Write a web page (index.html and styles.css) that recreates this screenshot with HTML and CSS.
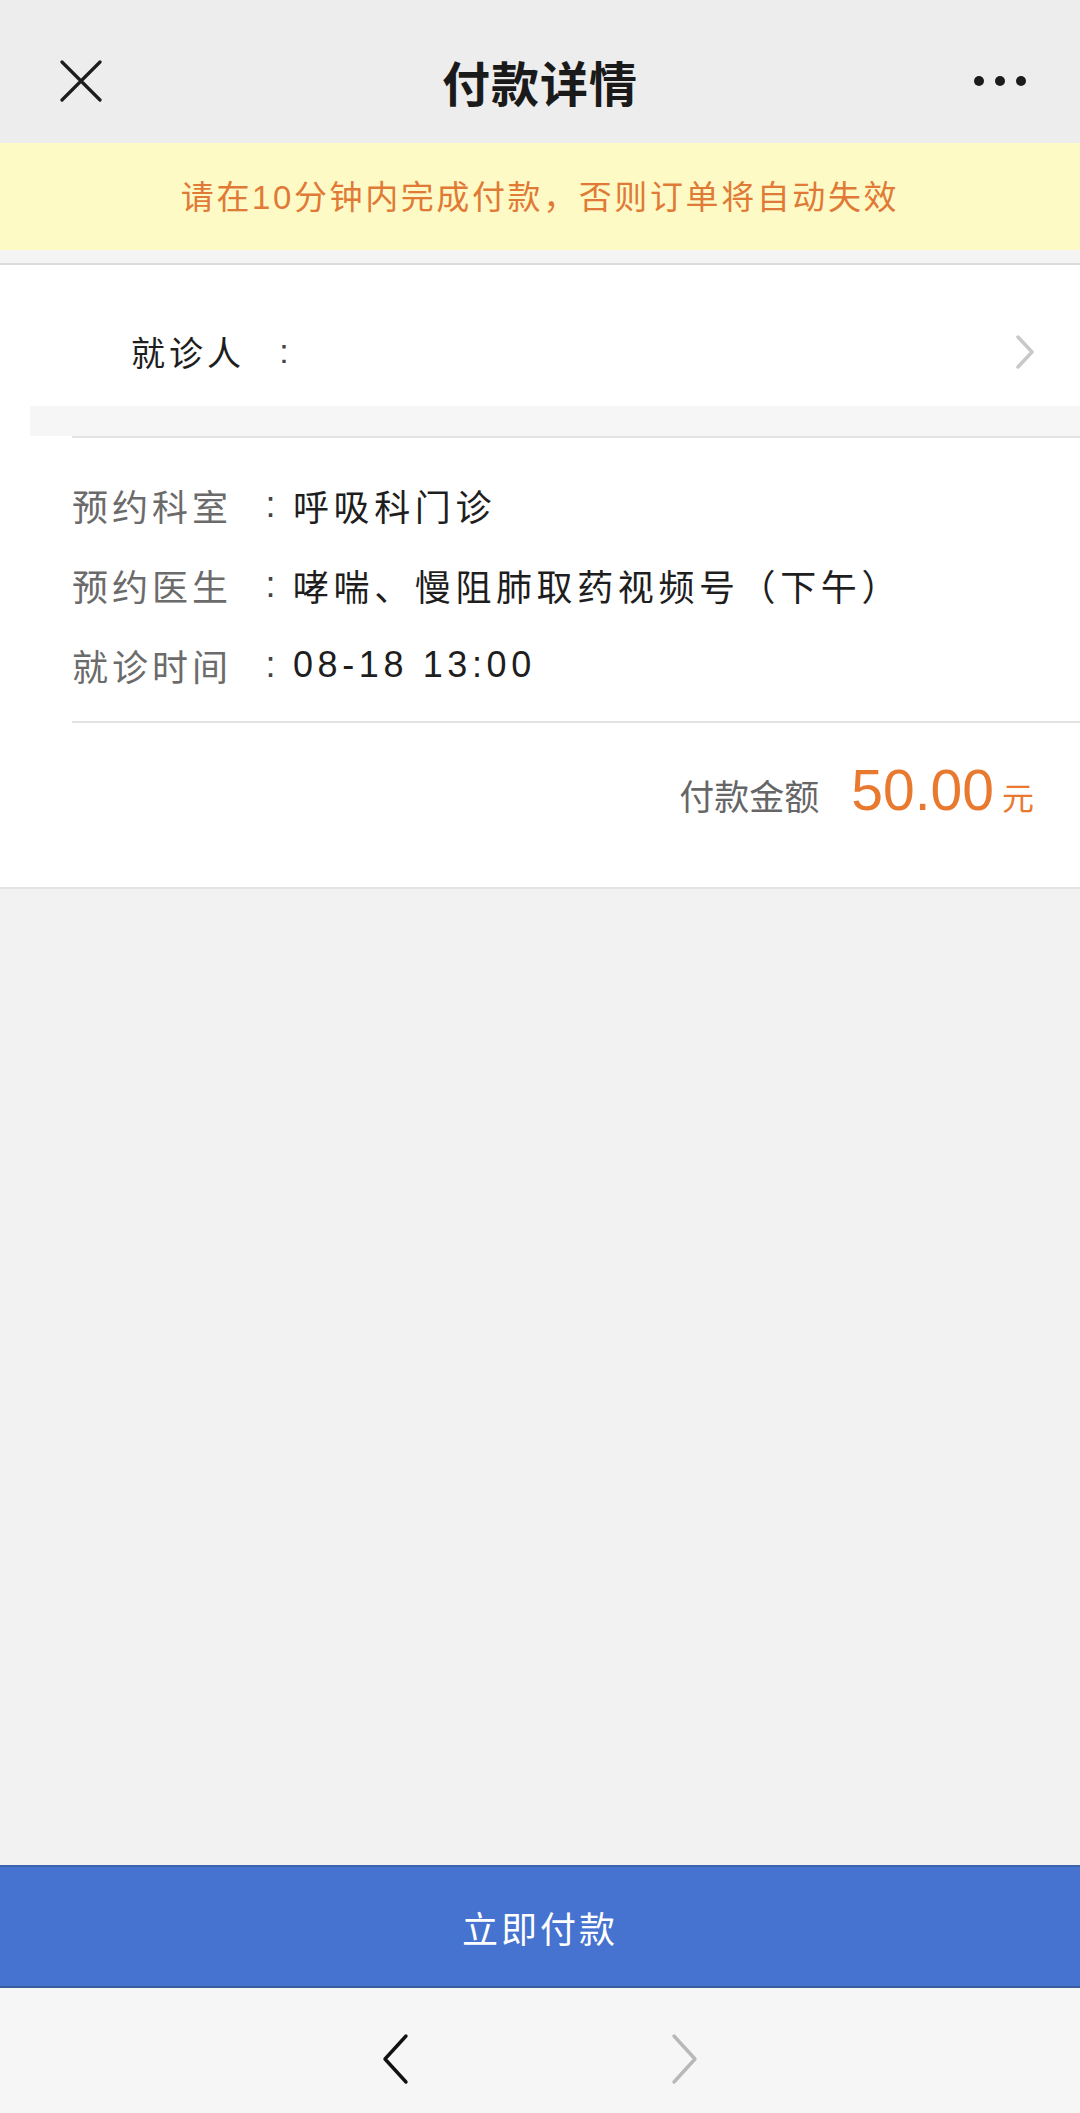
FILE: index.html
```html
<!DOCTYPE html>
<html lang="zh-CN">
<head>
<meta charset="utf-8">
<title>付款详情</title>
<link rel="stylesheet" href="styles.css">
</head>
<body>
<div class="page">
  <header class="nav">
    <svg class="nav-close" width="42" height="42" viewBox="0 0 42 42"><path d="M2 2 L40 40 M40 2 L2 40" stroke="#1c1c1c" stroke-width="3.2" fill="none" stroke-linecap="round"/></svg>
    <h1 class="nav-title">付款详情</h1>
    <div class="nav-more"><span></span><span></span><span></span></div>
  </header>
  <div class="notice">请在10分钟内完成付款，否则订单将自动失效</div>
  <div class="gap"></div>
  <section class="card">
    <div class="patient">
      <span class="patient-label">就诊人</span><span class="colon">:</span>
      <svg class="chev" width="22" height="34" viewBox="0 0 22 34"><path d="M4 2 L18 17 L4 32" stroke="#c8c8c8" stroke-width="3.5" fill="none" stroke-linecap="round" stroke-linejoin="round"/></svg>
    </div>
    <div class="strip"></div>
    <div class="details">
      <div class="row"><span class="label">预约科室</span><span class="colon">:</span><span class="value">呼吸科门诊</span></div>
      <div class="row"><span class="label">预约医生</span><span class="colon">:</span><span class="value">哮喘、慢阻肺取药视频号（下午）</span></div>
      <div class="row"><span class="label">就诊时间</span><span class="colon">:</span><span class="value">08-18 13:00</span></div>
    </div>
    <div class="amount">
      <span class="amount-label">付款金额</span>
      <span class="amount-num">50.00</span>
      <span class="amount-unit">元</span>
    </div>
  </section>
  <div class="spacer"></div>
  <button class="pay">立即付款</button>
  <footer class="toolbar">
    <svg width="32" height="52" viewBox="0 0 32 52"><path d="M27 3 L6 26 L27 49" stroke="#111" stroke-width="3.4" fill="none" stroke-linecap="round" stroke-linejoin="round"/></svg>
    <svg width="32" height="52" viewBox="0 0 32 52"><path d="M5 3 L26 26 L5 49" stroke="#b8b8b8" stroke-width="3.4" fill="none" stroke-linecap="round" stroke-linejoin="round"/></svg>
  </footer>
</div>
</body>
</html>
```

FILE: styles.css
```css
* { box-sizing: border-box; margin: 0; padding: 0; }
html, body { width: 1080px; height: 2113px; }
body {
  background: #f2f2f2;
  font-family: "Liberation Sans", "Noto Sans CJK SC", sans-serif;
  color: #222;
}
.page { display: flex; flex-direction: column; height: 2113px; }

.nav {
  height: 143px;
  background: #ededed;
  display: flex;
  align-items: center;
  justify-content: space-between;
  padding: 18px 54px 0 60px;
  position: relative;
}
.nav-title {
  position: absolute;
  left: 0; right: 0;
  text-align: center;
  font-size: 48px;
  font-weight: 700;
  color: #1a1a1a;
  letter-spacing: 1px;
  pointer-events: none;
}
.nav-more { display: flex; gap: 11px; }
.nav-more span { width: 10px; height: 10px; border-radius: 50%; background: #1c1c1c; }

.notice {
  height: 107px;
  background: #fdfac6;
  color: #e07a36;
  font-size: 33px;
  letter-spacing: 2.6px;
  display: flex;
  align-items: center;
  justify-content: center;
  padding-bottom: 4px;
}
.gap { height: 15px; background: #f4f4f4; border-bottom: 2px solid #dcdcdc; }

.card { background: #fff; border-bottom: 2px solid #e3e3e3; }
.patient {
  height: 141px;
  display: flex;
  align-items: center;
  padding: 32px 44px 0 131px;
  font-size: 34px;
  color: #1e1e1e;
}
.patient-label { letter-spacing: 4px; width: 130px; }
.patient .colon { width: 46px; text-align: center; }
.chev { margin-left: auto; }
.strip { height: 30px; background: #f6f6f6; margin-left: 30px; }

.details {
  margin-left: 72px;
  border-top: 2px solid #e3e3e3;
  border-bottom: 2px solid #e3e3e3;
  padding: 27px 0 16px;
}
.row {
  height: 80px;
  display: flex;
  align-items: center;
  font-size: 36px;
}
.label { width: 176px; color: #6b6b6b; letter-spacing: 4px; }
.colon { width: 45px; text-align: center; color: #444; }
.value { color: #1e1e1e; letter-spacing: 4.6px; }

.amount {
  height: 164px;
  display: flex;
  align-items: baseline;
  justify-content: flex-end;
  padding: 34px 46px 0 0;
}
.amount-label { font-size: 35px; color: #666; margin-right: 32px; }
.amount-num { font-size: 57px; color: #e8792f; margin-right: 8px; }
.amount-unit { font-size: 32px; color: #e8792f; }

.spacer { flex: 1; }

.pay {
  height: 123px;
  width: 100%;
  background: #4573cf;
  border: none;
  border-top: 2px solid #3b64ab;
  border-bottom: 2px solid #3a5c9c;
  color: #fff;
  font-family: "Liberation Sans", "Noto Sans CJK SC", sans-serif;
  font-size: 36px;
  letter-spacing: 3px;
}
.toolbar {
  height: 125px;
  background: #f6f6f6;
  display: flex;
  align-items: center;
  justify-content: center;
  gap: 258px;
  padding-top: 16px;
}
```
